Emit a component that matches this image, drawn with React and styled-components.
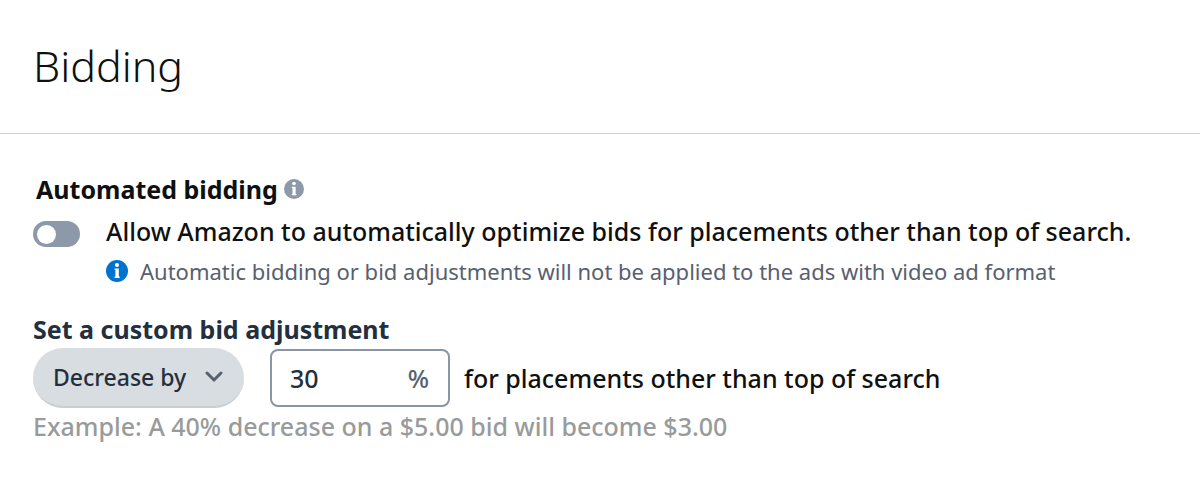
import styled, { createGlobalStyle } from "styled-components";
import { useState } from "react";

const GlobalStyle = createGlobalStyle`
  body {
    margin: 0;
    background: #fff;
    color: #0f1111;
    font-family: "Noto Sans", "Open Sans", sans-serif;
    font-size: 25px;
    line-height: 36px;
  }

  * {
    box-sizing: border-box;
  }
`;

const Header = styled.header`
  padding: 34px 33px 35px;
  border-bottom: 1px solid #d0d2d3;
`;

const Title = styled.h1`
  margin: 0;
  font-size: 43px;
  font-weight: 300;
  line-height: 64px;
`;

const Body = styled.main`
  padding: 37px 33px;
`;

const SectionTitle = styled.h2`
  display: flex;
  align-items: center;
  gap: 6px;
  margin: 0;
  padding-left: 3px;
  font-size: 25px;
  font-weight: 700;
`;

const OptionRow = styled.div`
  display: grid;
  grid-template-columns: 47px 1fr;
  column-gap: 26px;
  align-items: center;
  padding-top: 6px;
`;

const Toggle = styled.input`
  appearance: none;
  display: flex;
  align-items: center;
  width: 47px;
  height: 26px;
  margin: 6px 0 0;
  padding: 0 4px;
  border-radius: 13px;
  background: ${(p) => (p.checked ? "#0073cf" : "#8d99a8")};
  cursor: pointer;

  &::before {
    content: "";
    width: 19px;
    height: 19px;
    margin-left: ${(p) => (p.checked ? "auto" : "0")};
    border-radius: 50%;
    background: #fff;
  }
`;

const ToggleLabel = styled.label`
  font-weight: 500;
`;

const Notice = styled.p`
  grid-column: 2;
  display: flex;
  align-items: center;
  gap: 12px;
  margin: 4px 0 0;
  color: #57606f;
  font-size: 22px;
`;

const AdjustTitle = styled.h3`
  margin: 22px 0 0;
  color: #232f3e;
  font-size: 25px;
  font-weight: 700;
`;

const AdjustRow = styled.div`
  display: flex;
  align-items: center;
  margin-top: 1px;
  font-weight: 500;
`;

const SelectWrap = styled.div`
  position: relative;
  width: 211px;
  margin-right: 26px;
`;

const Select = styled.select`
  appearance: none;
  display: block;
  width: 100%;
  height: 60px;
  padding: 0 48px 0 20px;
  border: 0;
  border-bottom: 2px solid #c9ced2;
  border-radius: 30px;
  background: #d8dde1;
  color: #232f3e;
  font: inherit;
  font-size: 23px;
`;

const Chevron = styled.svg`
  position: absolute;
  top: 22px;
  right: 21px;
  pointer-events: none;
`;

const AmountBox = styled.div`
  display: flex;
  align-items: center;
  width: 180px;
  height: 58px;
  margin-right: 14px;
  padding: 0 19px 0 18px;
  border: 2px solid #8996a8;
  border-radius: 8px;
`;

const AmountInput = styled.input`
  flex: 1;
  min-width: 0;
  padding: 0;
  border: 0;
  outline: 0;
  background: transparent;
  color: #232f3e;
  font: inherit;
`;

const Percent = styled.span`
  color: #57606f;
`;

const Example = styled.p`
  margin: 0;
  color: #999b9b;
  font-weight: 500;
`;

function InfoIcon({ size, color }) {
  return (
    <svg width={size} height={size} viewBox="0 0 22 22" aria-hidden="true">
      <circle cx="11" cy="11" r="11" fill={color} />
      <circle cx="11" cy="5" r="2" fill="#fff" />
      <path d="M8.6 8.4h4.2v8h.9v1.6H8.6v-1.6h.8V10h-.8z" fill="#fff" />
    </svg>
  );
}

export default function App() {
  const [automated, setAutomated] = useState(false);
  const [direction, setDirection] = useState("decrease");
  const [amount, setAmount] = useState("30");

  return (
    <>
      <GlobalStyle />
      <Header>
        <Title>Bidding</Title>
      </Header>
      <Body>
        <SectionTitle>
          Automated bidding
          <InfoIcon size={20} color="#8d99a8" />
        </SectionTitle>
        <OptionRow>
          <Toggle
            id="automated"
            type="checkbox"
            role="switch"
            checked={automated}
            onChange={(e) => setAutomated(e.target.checked)}
          />
          <ToggleLabel htmlFor="automated">
            Allow Amazon to automatically optimize bids for placements other
            than top of search.
          </ToggleLabel>
          <Notice>
            <InfoIcon size={22} color="#0073cf" />
            Automatic bidding or bid adjustments will not be applied to the ads
            with video ad format
          </Notice>
        </OptionRow>
        <AdjustTitle id="adjust-title">Set a custom bid adjustment</AdjustTitle>
        <AdjustRow>
          <SelectWrap>
            <Select
              aria-labelledby="adjust-title"
              value={direction}
              onChange={(e) => setDirection(e.target.value)}
            >
              <option value="decrease">Decrease by</option>
              <option value="increase">Increase by</option>
            </Select>
            <Chevron width="18" height="14" viewBox="0 0 18 14">
              <path
                d="M2 3l7 7 7-7"
                fill="none"
                stroke="#57606f"
                strokeWidth="3"
                strokeLinecap="round"
              />
            </Chevron>
          </SelectWrap>
          <AmountBox>
            <AmountInput
              id="amount"
              inputMode="numeric"
              value={amount}
              onChange={(e) => setAmount(e.target.value)}
            />
            <Percent>%</Percent>
          </AmountBox>
          <label htmlFor="amount">for placements other than top of search</label>
        </AdjustRow>
        <Example>Example: A 40% decrease on a $5.00 bid will become $3.00</Example>
      </Body>
    </>
  );
}
